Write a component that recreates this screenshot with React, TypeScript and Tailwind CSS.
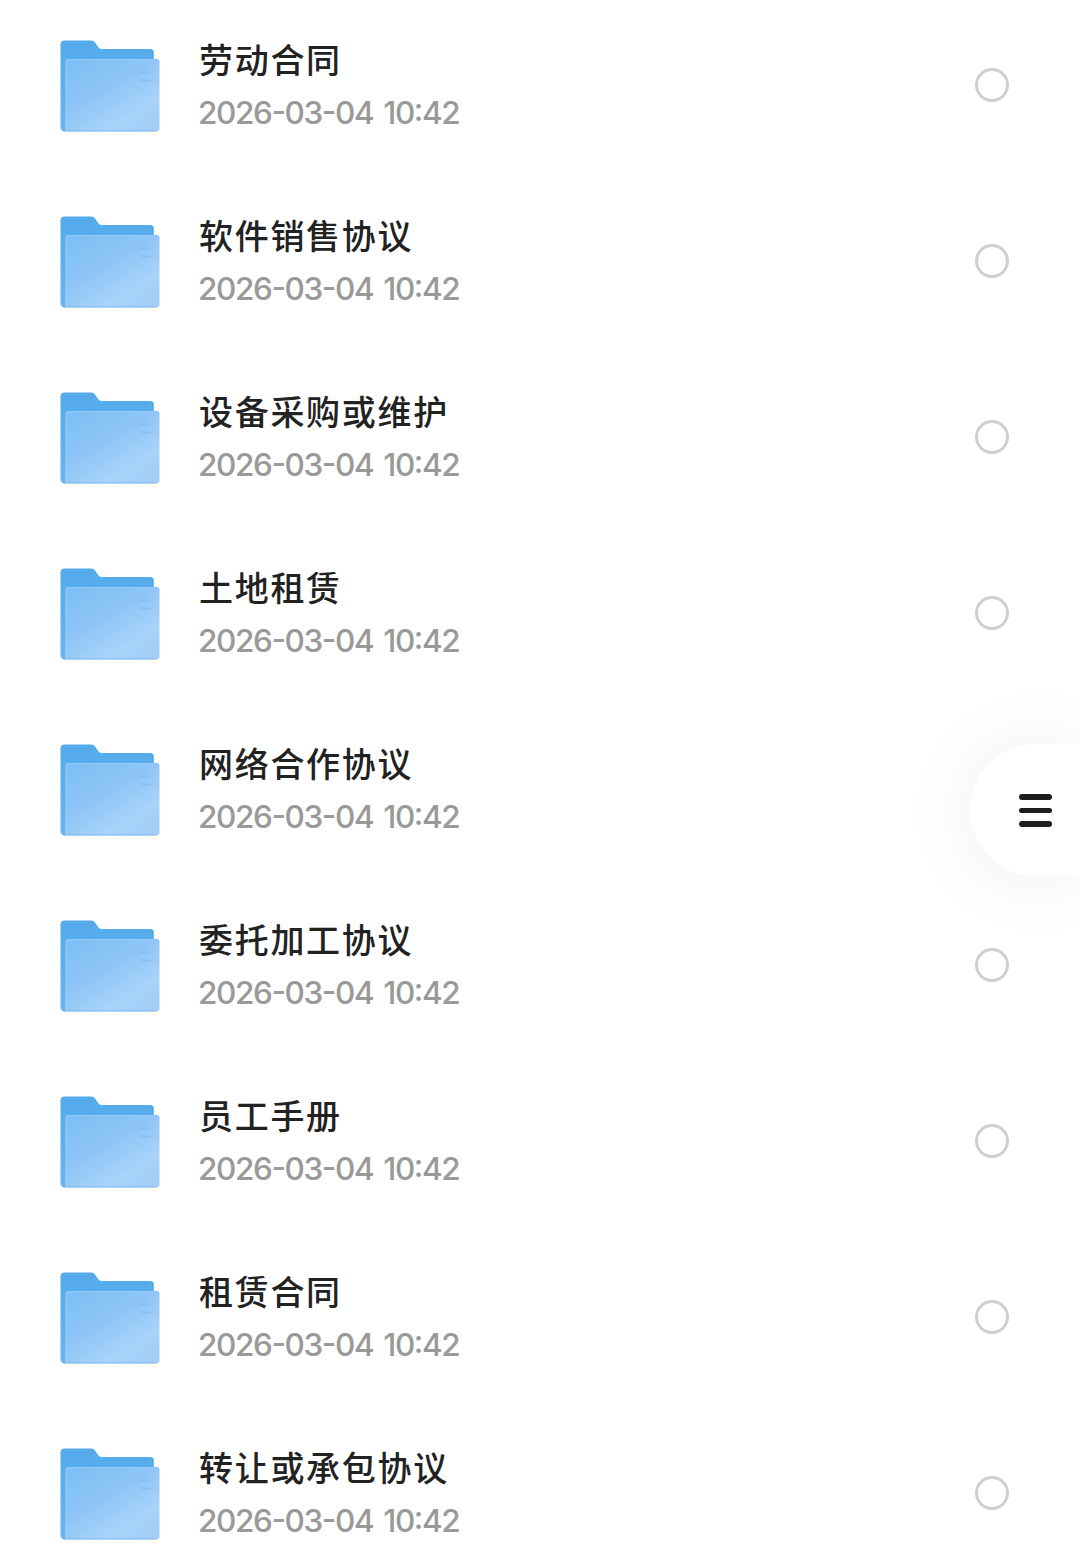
const UPDATED_AT = "2026-03-04 10:42";

const folders = [
  "劳动合同",
  "软件销售协议",
  "设备采购或维护",
  "土地租赁",
  "网络合作协议",
  "委托加工协议",
  "员工手册",
  "租赁合同",
  "转让或承包协议",
];

function FolderIcon() {
  return (
    <svg width="100" height="92" viewBox="0 0 100 92" fill="none" className="shrink-0">
      <defs>
        <linearGradient id="folder-back" x1="0" y1="0" x2="0" y2="92" gradientUnits="userSpaceOnUse">
          <stop stopColor="#55abea" />
          <stop offset="0.3" stopColor="#58adee" />
          <stop offset="1" stopColor="#6db5ed" />
        </linearGradient>
        <linearGradient id="folder-front" x1="20" y1="12" x2="72" y2="98" gradientUnits="userSpaceOnUse">
          <stop stopColor="#7dbff3" />
          <stop offset="0.45" stopColor="#8ec5f6" />
          <stop offset="0.8" stopColor="#a8d3fa" />
          <stop offset="1" stopColor="#a2cdf7" />
        </linearGradient>
      </defs>
      <path
        d="M.5 4.5a4 4 0 0 1 4-4h26.500c1.900 0 3.200.8 4.200 2.300l3.200 4.400c.8 1.100 1.700 1.700 3.200 1.700h48.300a4 4 0 0 1 4 4V91.300H4.500a4 4 0 0 1-4-4V4.500Z"
        fill="url(#folder-back)"
      />
      <path
        d="M5.500 22a3 3 0 0 1 3-3h88a3 3 0 0 1 3 3v66.300a3 3 0 0 1-3 3h-91V22Z"
        fill="url(#folder-front)"
      />
      <path d="M6 90V22a2.500 2.500 0 0 1 2.500-2.500H96" stroke="#a0d2f9" strokeOpacity="0.6" />
      <path d="M3 91H97" stroke="#6fabdf" strokeOpacity="0.6" />
      <path d="M80 32.500h11M80 40.500h11" stroke="#7db5f0" strokeWidth="2.500" strokeOpacity="0.4" />
    </svg>
  );
}

function FolderRow({ name }: { name: string }) {
  return (
    <li className="flex h-44 items-start pt-10 pr-[71px] pl-[60px]">
      <FolderIcon />
      <div className="-mt-px ml-[39px] flex-1 whitespace-nowrap">
        <p className="text-[34px] leading-10 font-medium tracking-[1.7px] text-[#222]">{name}</p>
        <p className="mt-3 -ml-px font-['Inter','Noto_Sans_CJK_SC',sans-serif] text-[31.5px] leading-[43px] font-medium tracking-[-1.4px] text-[#999] [font-feature-settings:'case'] [word-spacing:3px]">
          {UPDATED_AT}
        </p>
      </div>
      <span className="mt-7 size-[34px] rounded-full border-3 border-[#cfcfcf]" />
    </li>
  );
}

export default function App() {
  return (
    <main className="relative h-[1554px] w-[1080px] overflow-hidden bg-white font-['Noto_Sans_CJK_SC',sans-serif]">
      <ul>
        {folders.map((name) => (
          <FolderRow key={name} name={name} />
        ))}
      </ul>

      {/* Side menu handle */}
      <button
        type="button"
        aria-label="菜单"
        className="absolute top-[744px] right-0 flex h-[132px] w-[110px] flex-col justify-center gap-2 rounded-l-full bg-white pt-px pl-[49px] shadow-[0_2px_80px_rgba(0,0,0,0.07)]"
      >
        <span className="h-[5.5px] w-[33px] rounded-full bg-[#1d1d1f]" />
        <span className="h-[5.5px] w-[33px] rounded-full bg-[#1d1d1f]" />
        <span className="h-[5.5px] w-[33px] rounded-full bg-[#1d1d1f]" />
      </button>
    </main>
  );
}
